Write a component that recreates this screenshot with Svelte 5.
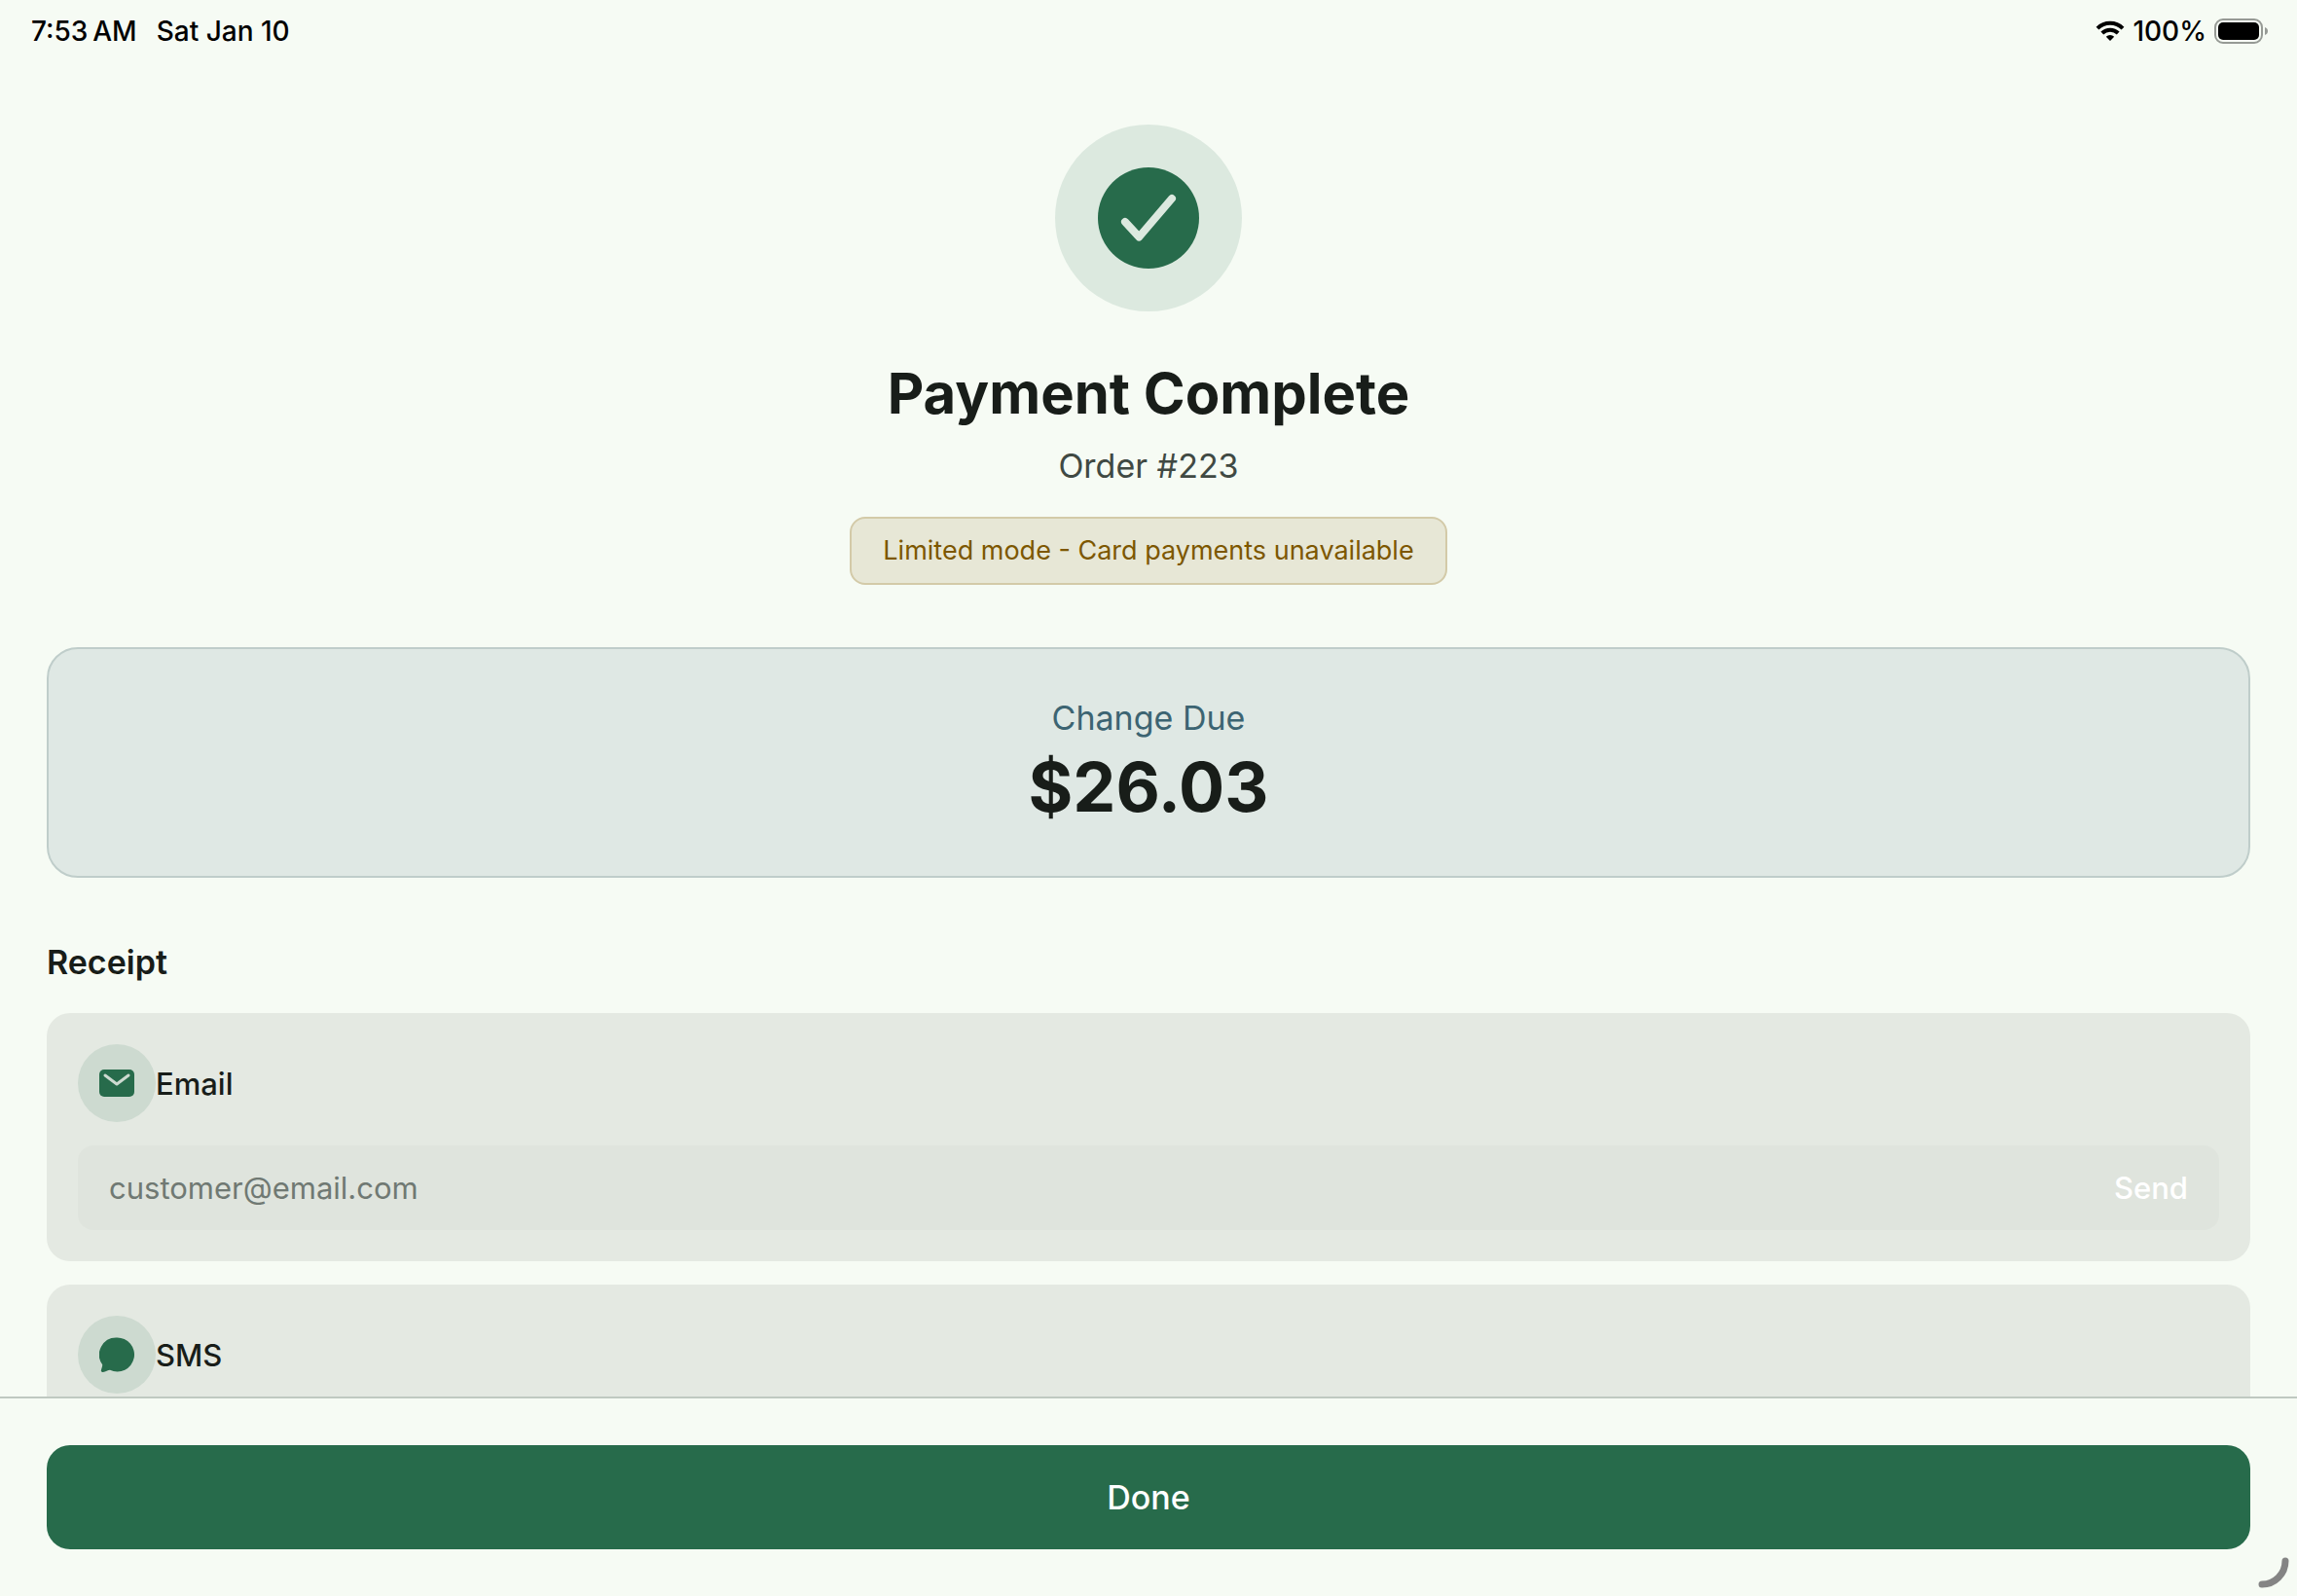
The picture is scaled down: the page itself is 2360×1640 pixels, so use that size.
<script>
  let orderNumber = $state(223);
  let changeDue = $state(26.03);
  let email = $state('');
</script>

<div class="screen">
  <header class="status">
    <div class="status-group when">
      <span>7:53&#8239;AM</span>
      <span>Sat Jan 10</span>
    </div>
    <div class="status-group">
      <svg class="wifi" width="30" height="22" viewBox="0 0 30 22" aria-hidden="true">
        <path d="M2 8.2a18.5 18.5 0 0 1 26 0" />
        <path d="M6.800 13a11.700 11.700 0 0 1 16.400 0" />
        <path class="dot" d="M15 21l4.200-4.300a6 6 0 0 0-8.400 0z" />
      </svg>
      <span>100%</span>
      <svg class="battery" width="56" height="26" viewBox="0 0 56 26" aria-hidden="true">
        <rect class="shell" x="1" y="1" width="48" height="24" rx="8" />
        <rect x="4" y="4" width="42" height="18" rx="5" />
        <path class="nub" d="M52 9c4 1.200 4 6.800 0 8z" />
      </svg>
    </div>
  </header>

  <main class="content">
    <section class="summary">
      <div class="badge">
        <svg width="104" height="104" viewBox="0 0 104 104" aria-hidden="true">
          <circle cx="52" cy="52" r="52" />
          <path d="M28 56l14.300 15.500L76 32" />
        </svg>
      </div>
      <h1>Payment Complete</h1>
      <p class="order">Order #{orderNumber}</p>
      <p class="notice">Limited mode - Card payments unavailable</p>
    </section>

    <section class="change">
      <p class="change-label">Change Due</p>
      <p class="amount">${changeDue.toFixed(2)}</p>
    </section>

    <section class="receipt">
      <h2>Receipt</h2>
      <div class="card">
        <label class="method" for="email">
          <span class="icon">
            <svg width="36" height="36" viewBox="0 0 36 36" aria-hidden="true">
              <rect x="0" y="4" width="36" height="28" rx="5" />
              <path class="fold" d="M6 10l12 9 12-9" />
            </svg>
          </span>
          Email
        </label>
        <form class="field" onsubmit={(e) => e.preventDefault()}>
          <input id="email" type="email" placeholder="customer@email.com" bind:value={email} />
          <button class="send" disabled={!email}>Send</button>
        </form>
      </div>
      <div class="card">
        <div class="method">
          <span class="icon">
            <svg width="36" height="36" viewBox="0 0 36 36" aria-hidden="true">
              <path d="M18 .5a17.500 17.500 0 1 1-7 33.300c-2 .2-4.500 1.700-7.200 2.100-1.300.2-2.200-.7-1.900-1.900.4-1.800 1.400-3.600 1.300-5.800A17.500 17.500 0 0 1 18 .5z" />
            </svg>
          </span>
          SMS
        </div>
      </div>
    </section>
  </main>

  <footer class="actions">
    <button class="done">Done</button>
  </footer>

  <svg class="corner" width="32" height="32" viewBox="0 0 32 32" aria-hidden="true">
    <path d="M28 4A24 24 0 0 1 4 28" />
  </svg>
</div>

<style>
  :global(body) {
    margin: 0;
  }
  .screen {
    position: relative;
    display: flex;
    flex-direction: column;
    height: 100vh;
    background: #f6fbf4;
    color: #181d19;
    font-family: Inter, 'Liberation Sans', sans-serif;
  }
  h1, h2, p {
    margin: 0;
  }
  button, input {
    font: inherit;
    border: none;
    background: transparent;
  }

  .status {
    flex: none;
    display: flex;
    justify-content: space-between;
    align-items: center;
    height: 64px;
    padding: 0 29px 0 32px;
    font-size: 28px;
    font-weight: 500;
    color: #000;
  }
  .status-group {
    display: flex;
    align-items: center;
    gap: 8px;
  }
  .when {
    gap: 20px;
  }
  .wifi {
    fill: none;
    stroke: #000;
    stroke-width: 4;
  }
  .wifi .dot {
    fill: #000;
    stroke: none;
  }
  .battery .shell {
    fill: none;
    stroke: #969a95;
    stroke-width: 2;
  }
  .battery .nub {
    fill: #969a95;
  }

  .content {
    flex: 1;
    min-height: 0;
    display: flex;
    flex-direction: column;
    gap: 64px;
    padding: 64px 48px 0;
    overflow: hidden;
  }
  .content > section {
    flex: none;
  }
  .summary {
    display: flex;
    flex-direction: column;
    align-items: center;
  }
  .badge {
    display: flex;
    align-items: center;
    justify-content: center;
    width: 192px;
    height: 192px;
    margin-bottom: 48px;
    border-radius: 50%;
    background: #dce9df;
  }
  .badge circle {
    fill: #276b4b;
  }
  .badge path {
    fill: none;
    stroke: #dce9df;
    stroke-width: 8;
    stroke-linecap: round;
    stroke-linejoin: round;
  }
  h1 {
    font-size: 58px;
    line-height: 72px;
    font-weight: 700;
  }
  .order {
    margin-top: 16px;
    font-size: 34px;
    line-height: 45px;
    color: #404943;
  }
  .notice {
    margin-top: 30px;
    padding: 16px 32px;
    border: 2px solid #d3caa8;
    border-radius: 16px;
    background: #e7e7d6;
    font-size: 27px;
    line-height: 34px;
    color: #7d5700;
  }

  .change {
    padding: 48px;
    border: 2px solid #bfcdca;
    border-radius: 32px;
    background: #dfe8e4;
    text-align: center;
  }
  .change-label {
    margin-bottom: 6px;
    font-size: 34px;
    line-height: 45px;
    color: #3c6472;
  }
  .amount {
    font-size: 70px;
    line-height: 86px;
    font-weight: 700;
  }

  .receipt {
    display: flex;
    flex-direction: column;
    gap: 24px;
  }
  h2 {
    margin-bottom: 6px;
    font-size: 34px;
    line-height: 45px;
    font-weight: 600;
  }
  .card {
    display: flex;
    flex-direction: column;
    gap: 24px;
    padding: 32px;
    border-radius: 24px;
    background: #e4e9e2;
  }
  .method {
    display: flex;
    align-items: center;
    font-size: 31px;
    font-weight: 500;
  }
  .icon {
    display: flex;
    align-items: center;
    justify-content: center;
    width: 80px;
    height: 80px;
    border-radius: 50%;
    background: #cddad0;
    fill: #276b4b;
  }
  .fold {
    fill: none;
    stroke: #cddad0;
    stroke-width: 3;
    stroke-linecap: round;
    stroke-linejoin: round;
  }
  .field {
    display: flex;
    border-radius: 16px;
    background: #dfe4dd;
    font-size: 31px;
    line-height: 39px;
  }
  .field input {
    flex: 1;
    min-width: 0;
    padding: 24px 32px;
    color: #181d19;
    outline: none;
  }
  .field input::placeholder {
    color: #707973;
    opacity: 1;
  }
  .send {
    padding: 24px 32px;
    font-weight: 500;
    color: #fff;
  }

  .actions {
    flex: none;
    display: flex;
    padding: 48px;
    border-top: 2px solid #bfc9c1;
  }
  .done {
    flex: 1;
    padding: 32px;
    border-radius: 24px;
    background: #276b4b;
    color: #fff;
    font-size: 34px;
    line-height: 43px;
    font-weight: 500;
    cursor: pointer;
  }

  .corner {
    position: absolute;
    right: 8px;
    bottom: 8px;
    fill: none;
    stroke: #848484;
    stroke-width: 7;
    stroke-linecap: round;
  }
</style>
